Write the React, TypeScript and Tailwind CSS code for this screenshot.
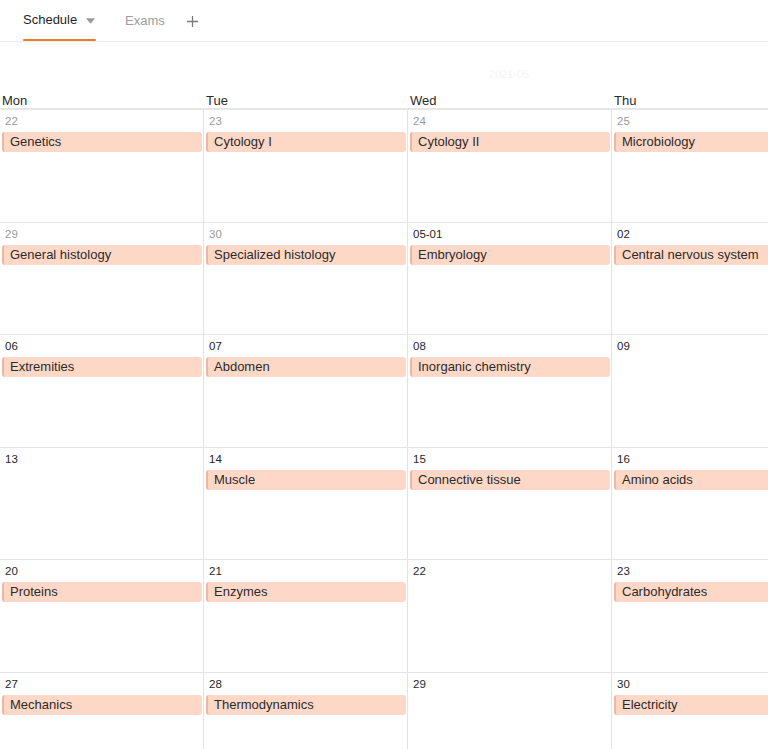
import React from "react";

type Day = { d: string; past?: boolean; title?: string };

const DAYS = ["Mon", "Tue", "Wed", "Thu"];

const WEEKS: Day[][] = [
  [
    { d: "22", past: true, title: "Genetics" },
    { d: "23", past: true, title: "Cytology I" },
    { d: "24", past: true, title: "Cytology II" },
    { d: "25", past: true, title: "Microbiology" },
  ],
  [
    { d: "29", past: true, title: "General histology" },
    { d: "30", past: true, title: "Specialized histology" },
    { d: "05-01", title: "Embryology" },
    { d: "02", title: "Central nervous system" },
  ],
  [
    { d: "06", title: "Extremities" },
    { d: "07", title: "Abdomen" },
    { d: "08", title: "Inorganic chemistry" },
    { d: "09" },
  ],
  [
    { d: "13" },
    { d: "14", title: "Muscle" },
    { d: "15", title: "Connective tissue" },
    { d: "16", title: "Amino acids" },
  ],
  [
    { d: "20", title: "Proteins" },
    { d: "21", title: "Enzymes" },
    { d: "22" },
    { d: "23", title: "Carbohydrates" },
  ],
  [
    { d: "27", title: "Mechanics" },
    { d: "28", title: "Thermodynamics" },
    { d: "29" },
    { d: "30", title: "Electricity" },
  ],
];

function Cell({ day }: { day: Day }) {
  return (
    <div className="w-[204px] shrink-0 h-full border-r border-[#e3e3e3] flex flex-col">
      <div
        className={`pl-[5px] pt-[4px] h-[22px] text-[11.5px] leading-[14px] ${
          day.past ? "text-[#9a9a9a]" : "text-[#262626]"
        }`}
      >
        {day.d}
      </div>
      {day.title && (
        <div className="ml-[2px] mr-[1px] h-[20px] rounded-[3px] bg-[#fed8c7] border-l-[2px] border-[#f3b59d] pl-[6px] text-[13px] leading-[20px] text-[#2b2b2b] whitespace-nowrap overflow-hidden">
          {day.title}
        </div>
      )}
    </div>
  );
}

export default function App() {
  return (
    <div
      className="w-screen h-[749px] overflow-hidden bg-white"
      style={{ fontFamily: "'Liberation Sans', Arial, sans-serif" }}
    >
      {/* tabs */}
      <div className="h-[42px] border-b border-[#ececec] flex items-end pl-[23px]">
        <div className="flex flex-col">
          <div className="flex items-center gap-[9px] h-[39px] pt-[1px]">
            <span className="text-[13px] font-medium text-[#1f1f1f]">Schedule</span>
            <svg viewBox="0 0 10 6" className="w-[9px] h-[6px] mt-[1px]">
              <path d="M0 0h10L5 6z" fill="#9a9a9a" />
            </svg>
          </div>
          <div className="h-[2px] w-[73px] bg-[#f47b25] rounded-full" />
        </div>
        <div className="h-[41px] flex items-center pt-[1px] ml-[29px] text-[13px] text-[#9c9c9c]">
          Exams
        </div>
        <div className="h-[41px] flex items-center pt-[1px] ml-[21px]">
          <svg viewBox="0 0 14 14" className="w-[13px] h-[13px]">
            <path d="M7 1v12M1 7h12" stroke="#7a7a7a" strokeWidth="1.4" />
          </svg>
        </div>
      </div>

      {/* faint month label */}
      <div className="h-[48px] flex items-end justify-center pb-[10px] pl-[250px] text-[11px] leading-[12px] text-[#f4f4f4]">
        2021-05
      </div>

      {/* weekday header */}
      <div className="flex h-[20px] pt-[3px] border-b-2 border-[#e6e6e6]">
        {DAYS.map((d) => (
          <div key={d} className="w-[204px] shrink-0 pl-[2px] text-[13px] leading-[16px] text-[#2a2a2a]">
            {d}
          </div>
        ))}
      </div>

      {/* weeks */}
      {WEEKS.map((w, i) => (
        <div key={i} className="flex h-[112.6px] border-b border-[#e6e6e6]">
          {w.map((day, j) => (
            <Cell key={j} day={day} />
          ))}
        </div>
      ))}
    </div>
  );
}
